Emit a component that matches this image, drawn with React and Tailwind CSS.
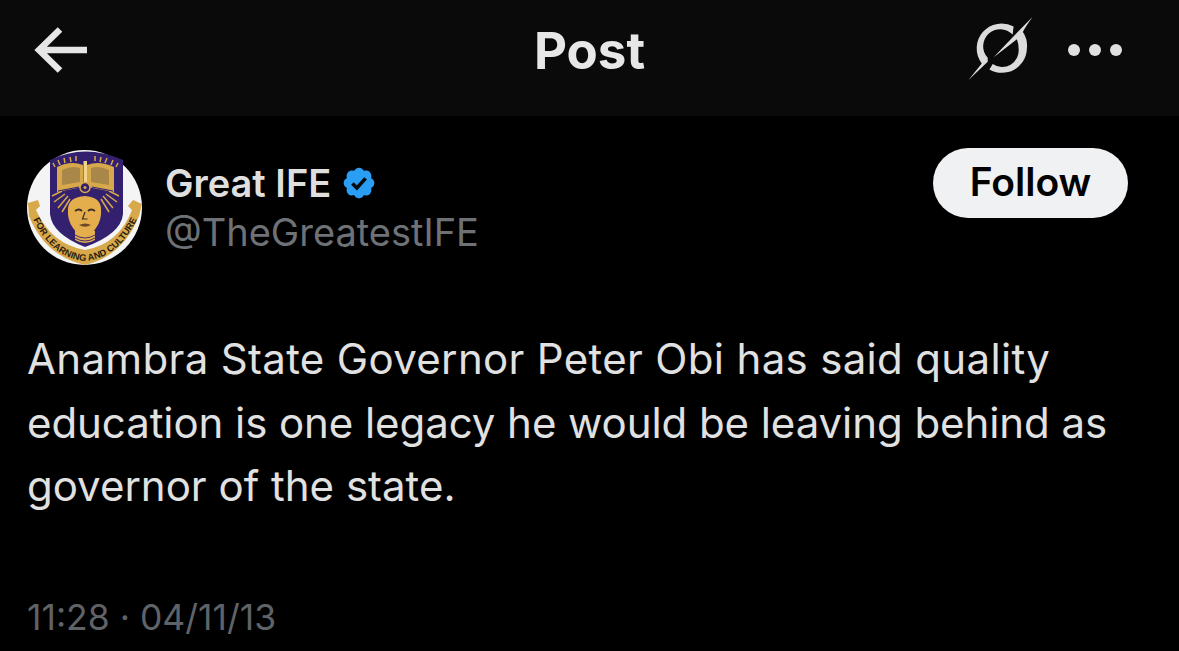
import React from 'react';

const FONT = 'font-[Inter,"Noto_Sans",sans-serif]';

function Emblem() {
    return (
        <svg width="115" height="115" viewBox="0 0 115 115" className="shrink-0">
            <circle cx="57.5" cy="57.5" r="57.5" fill="#f4f4f4" />
            {/* shield */}
            <path d="M23 10 Q58 -7 96 10 L96 64 Q94 84 58 97 Q25 84 23 64 Z" fill="#33206f" />
            {/* rays */}
            <g stroke="#d8a94a" strokeWidth="1.5">
                <path d="M26 13 L28 17 M31 10 L33 15 M37 8 L38 13 M43 7 L44 12 M49 6 L49 11 M68 6 L68 11 M74 7 L73 12 M80 8 L78 13 M86 10 L84 15 M91 13 L89 17" />
                <path d="M25 46 L35 41 M27 52 L38 44 M31 58 L41 46 M35 62 L43 49 M92 46 L82 41 M90 52 L79 44 M86 58 L76 46 M82 62 L74 49" />
            </g>
            {/* book */}
            <path d="M30 17 Q44 10 56 15 L56 37 L30 42 Z M60 15 Q72 10 87 17 L87 42 L60 37 Z" fill="#d8a94a" />
            <path d="M35 20 Q45 15 53 18 L53 32 L35 35 Z M64 18 Q72 15 82 20 L82 35 L64 32 Z" fill="#a98748" />
            <rect x="56.5" y="11" width="3.5" height="24" fill="#f0d48a" />
            <path d="M31 41 L52 37 M65 37 L86 41" stroke="#33206f" strokeWidth="1" />
            <circle cx="58" cy="37.5" r="5" fill="#33206f" stroke="#d8a94a" strokeWidth="1.5" />
            <circle cx="58" cy="37.5" r="1.5" fill="#d8a94a" />
            {/* head */}
            <path d="M41 58 Q42 47 58 46 Q73 47 74 58 Q75 70 69 78 Q65 85 58 85 Q50 85 46 78 Q40 70 41 58 Z" fill="#e5ae4c" />
            <path d="M48 81 L48 90 Q58 96 68 90 L68 81 Z" fill="#e5ae4c" />
            <path d="M48 61 Q52 58 55 61 M61 61 Q64 58 68 61" stroke="#3a2a2a" strokeWidth="1.8" fill="none" />
            <path d="M58 62 L55.5 69 L60.5 69" stroke="#3a2a2a" strokeWidth="1.2" fill="none" />
            <path d="M52 75 Q58 72 64 75 Q58 78.5 52 75 Z" fill="#6b4a2a" />
            <path d="M48 85 Q58 91 68 85 M48 88 Q58 94 68 88" stroke="#33206f" strokeWidth="0.9" fill="none" />
            {/* ribbon */}
            <path d="M1 53 L11 50 L13 56 L9 60 Q24 94 58 100 Q92 94 105 60 L101 56 L106 50 L115 54 L112 66 Q96 106 58 115 Q18 106 2 66 Z" fill="#d8a94a" />
            <path id="emblem-ribbon" d="M5 67 Q24 108 58 111 Q92 108 111 67" fill="none" />
            <text fontSize="9.3" fontWeight="700" fill="#2a1c10" fontFamily="Liberation Sans, sans-serif">
                <textPath href="#emblem-ribbon" startOffset="50%" textAnchor="middle">FOR LEARNING AND CULTURE</textPath>
            </text>
        </svg>
    );
}

function VerifiedBadge() {
    return (
        <svg width="36" height="36" viewBox="0 0 24 24" className="shrink-0">
            <path
                fill="#2a9df4"
                d="M22.25 12c0-1.43-.88-2.67-2.19-3.34.46-1.39.2-2.9-.81-3.91s-2.52-1.27-3.91-.81c-.66-1.31-1.91-2.19-3.34-2.19s-2.67.88-3.33 2.19c-1.4-.46-2.91-.2-3.92.81s-1.26 2.52-.8 3.91c-1.31.67-2.2 1.91-2.2 3.34s.89 2.67 2.2 3.34c-.46 1.39-.21 2.9.8 3.91s2.52 1.26 3.91.81c.67 1.31 1.91 2.19 3.34 2.19s2.68-.88 3.34-2.19c1.39.45 2.9.2 3.91-.81s1.27-2.52.81-3.91c1.31-.67 2.19-1.91 2.19-3.34z"
            />
            <path fill="none" stroke="#0a0a0a" strokeWidth="2.4" d="M7.6 12.3l3 3 5.8-6.4" />
        </svg>
    );
}

function BackArrow() {
    return (
        <svg width="56" height="48" viewBox="0 0 56 48" className="shrink-0">
            <path d="M54 24 H6 M27 3.5 L6 24 L27 44.5" fill="none" stroke="#e6e6e6" strokeWidth="6.5" />
        </svg>
    );
}

function SlashCircle() {
    return (
        <svg width="80" height="73" viewBox="60 40 240 220" className="shrink-0">
            <path d="M218 84 A75 75 0 0 0 122 195 L82 245 L140 190 L140 178 A50 50 0 0 1 215 108 Z" fill="#dcdcdc" />
            <path d="M275 55 Q250 90 246 100 A75 75 0 0 1 258 150 A75 75 0 0 1 145 213 L155 197 A50 50 0 0 0 233 150 Q233 135 228 122 L158 176 Q220 110 275 55 Z" fill="#dcdcdc" />
        </svg>
    );
}

export default function App() {
    return (
        <div className={`h-[651px] w-full bg-black overflow-hidden flex flex-col ${FONT}`}>
            <header className="h-[116px] shrink-0 bg-[#0a0a0a] grid grid-cols-[1fr_auto_1fr] items-center px-[33px] pb-[16px]">
                <BackArrow />
                <h1 className="text-[51px] font-bold text-[#e7e7e7] leading-none">Post</h1>
                <div className="flex items-center justify-end gap-[27px] pr-[24px] -mt-[3px]">
                    <SlashCircle />
                    <div className="flex gap-[9px] mt-[3px]">
                        <span className="w-3 h-3 rounded-full bg-[#e0e0e0]" />
                        <span className="w-3 h-3 rounded-full bg-[#e0e0e0]" />
                        <span className="w-3 h-3 rounded-full bg-[#e0e0e0]" />
                    </div>
                </div>
            </header>

            <main className="flex-1 px-[27px] pt-[34px]">
                <div className="flex items-center gap-[23px]">
                    <Emblem />
                    <div className="flex-1">
                        <div className="flex items-center gap-[10px]">
                            <span className="text-[38px] font-semibold text-[#dfdfdf] leading-[49px]">Great IFE</span>
                            <VerifiedBadge />
                        </div>
                        <div className="text-[38px] text-[#6e7277] leading-[49px]">@TheGreatestIFE</div>
                    </div>
                    <button className="w-[195px] h-[70px] rounded-full bg-[#eff1f2] text-black text-[39px] font-semibold mr-[24px] -mt-[50px]">
                        Follow
                    </button>
                </div>

                <p className="mt-[62px] text-[42px] leading-[63.5px] text-[#e1e1e1]">
                    <span className="tracking-[0.33px]">Anambra State Governor Peter Obi has said quality</span>
                    <br />
                    <span className="tracking-[-0.07px]">education is one legacy he would be leaving behind as</span>
                    <br />
                    governor of the state.
                </p>

                <div className="mt-[78px] text-[35.5px] leading-[44px] text-[#5f6368]">11:28 · 04/11/13</div>
            </main>
        </div>
    );
}
